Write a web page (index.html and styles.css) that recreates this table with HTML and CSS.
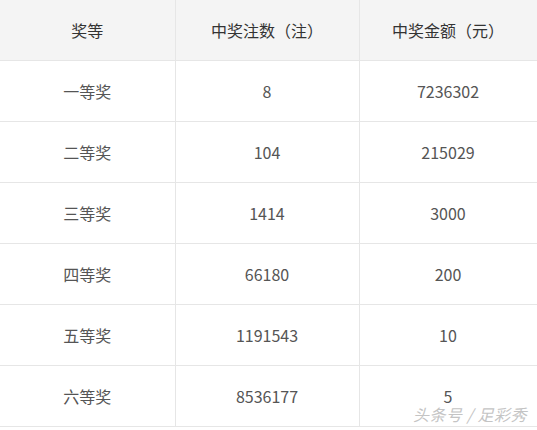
FILE: index.html
```html
<!DOCTYPE html>
<html lang="zh-CN">
<head>
<meta charset="utf-8">
<link rel="stylesheet" href="styles.css">
</head>
<body>
<div class="wrap">
  <table class="prize">
    <colgroup>
      <col class="c1"><col class="c2"><col class="c3">
    </colgroup>
    <thead>
      <tr><th>奖等</th><th>中奖注数（注）</th><th>中奖金额（元）</th></tr>
    </thead>
    <tbody>
      <tr><td>一等奖</td><td>8</td><td>7236302</td></tr>
      <tr><td>二等奖</td><td>104</td><td>215029</td></tr>
      <tr><td>三等奖</td><td>1414</td><td>3000</td></tr>
      <tr><td>四等奖</td><td>66180</td><td>200</td></tr>
      <tr><td>五等奖</td><td>1191543</td><td>10</td></tr>
      <tr><td>六等奖</td><td>8536177</td><td>5</td></tr>
    </tbody>
  </table>
  <div class="watermark">头条号 / 足彩秀</div>
</div>
</body>
</html>
```
FILE: styles.css
```css
html, body {
  margin: 0;
  padding: 0;
  background: #ffffff;
}
body {
  font-family: "Noto Sans CJK SC", "Noto Sans", sans-serif;
}
.wrap {
  position: relative;
  width: 537px;
  height: 430px;
  overflow: hidden;
}
.prize {
  border-collapse: collapse;
  table-layout: fixed;
  width: 537px;
}
.c1 { width: 175px; }
.c2 { width: 184px; }
.c3 { width: 178px; }
.prize th,
.prize td {
  height: 60px;
  padding: 0;
  text-align: center;
  vertical-align: middle;
  border-bottom: 1px solid #e6e6e6;
  border-right: 1px solid #e6e6e6;
  font-size: 16px;
  line-height: 20px;
}
.prize th {
  background: #f4f4f4;
  color: #333333;
  font-weight: normal;
}
.prize td {
  color: #555555;
}
.watermark {
  position: absolute;
  right: 10px;
  top: 405px;
  font-size: 16px;
  line-height: 18px;
  color: #c4c4c4;
  font-style: italic;
  letter-spacing: 0.5px;
}
```
